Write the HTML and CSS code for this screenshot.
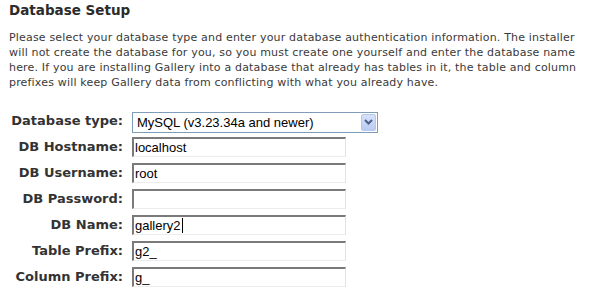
FILE: index.html
```html
<!DOCTYPE html>
<html>
<head>
<meta charset="utf-8">
<link rel="stylesheet" href="styles.css">
</head>
<body>
<div class="page">
  <h2 class="title">Database Setup</h2>
  <p class="intro">Please select your database type and enter your database authentication information. The installer will not create the database for you, so you must create one yourself and enter the database name here. If you are installing Gallery into a database that already has tables in it, the table and column prefixes will keep Gallery data from conflicting with what you already have.</p>
  <div class="form">
    <label class="lbl">Database type:</label>
    <div class="select">
      <span class="select-text">MySQL (v3.23.34a and newer)</span>
      <span class="select-btn"><svg width="9" height="6" viewBox="0 0 9 6"><path d="M1 1 L4.5 4.5 L8 1" fill="none" stroke="#4d6185" stroke-width="2"/></svg></span>
    </div>
    <label class="lbl">DB Hostname:</label>
    <div class="input">localhost</div>
    <label class="lbl">DB Username:</label>
    <div class="input">root</div>
    <label class="lbl">DB Password:</label>
    <div class="input"></div>
    <label class="lbl">DB Name:</label>
    <div class="input">gallery2<span class="caret"></span></div>
    <label class="lbl">Table Prefix:</label>
    <div class="input">g2_</div>
    <label class="lbl">Column Prefix:</label>
    <div class="input">g_</div>
  </div>
</div>
</body>
</html>
```
FILE: styles.css
```css
html, body {
  margin: 0;
  padding: 0;
  background: #ffffff;
}
.page {
  padding: 0 0 0 9px;
  font-family: "DejaVu Sans", Verdana, sans-serif;
  color: #333333;
}
.title {
  margin: 0;
  padding-top: 2px;
  font-size: 13.5px;
  line-height: 17px;
  font-weight: bold;
  color: #2b2b2b;
}
.intro {
  margin: 11px 0 0 0;
  font-size: 11px;
  line-height: 15px;
  letter-spacing: 0.18px;
  width: 572px;
  color: #3a3a3a;
}
.form {
  margin-top: 21px;
  display: grid;
  grid-template-columns: 114px auto;
  column-gap: 9px;
  row-gap: 6px;
  align-items: center;
  justify-content: start;
}
.lbl {
  font-size: 13px;
  font-weight: bold;
  text-align: right;
  color: #333333;
  white-space: nowrap;
  line-height: 20px;
}
.select {
  box-sizing: border-box;
  width: 246px;
  height: 21px;
  border: 1px solid #7f9db9;
  display: flex;
  align-items: center;
  justify-content: space-between;
  font-family: "Liberation Sans", Arial, sans-serif;
  font-size: 13px;
  color: #000;
  padding: 0 1px 0 4px;
  margin-bottom: -2px;
}
.select-btn {
  width: 15px;
  height: 17px;
  box-sizing: border-box;
  border: 1px solid #b5c8ec;
  border-radius: 2px;
  background: linear-gradient(#d6e2fb, #b9cbf3);
  display: flex;
  align-items: center;
  justify-content: center;
}
.input {
  box-sizing: border-box;
  width: 214px;
  height: 20px;
  border-top: 2px solid #7a7a7a;
  border-left: 2px solid #7a7a7a;
  border-right: 1px solid #e4e4e4;
  border-bottom: 1px solid #ececec;
  font-family: "Liberation Sans", Arial, sans-serif;
  font-size: 13px;
  line-height: 16px;
  color: #000;
  padding-left: 1px;
  display: flex;
  align-items: center;
}
.caret {
  display: inline-block;
  width: 1px;
  height: 15px;
  background: #000;
  margin-left: 1px;
}
```
